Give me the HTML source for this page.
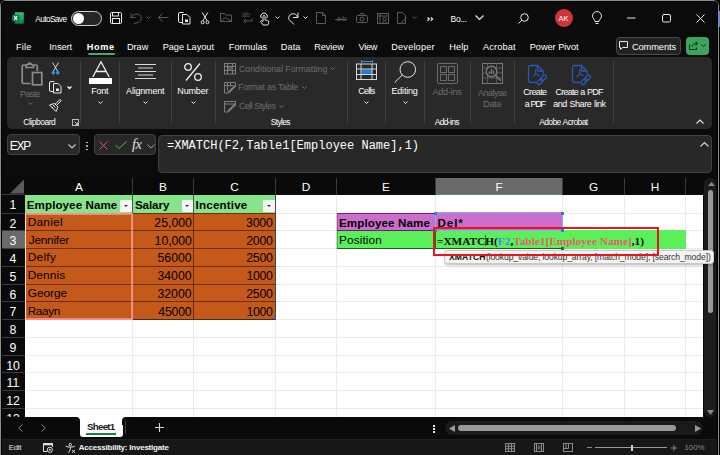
<!DOCTYPE html><html><head><meta charset="utf-8"><style>
*{margin:0;padding:0;box-sizing:border-box}
html,body{width:720px;height:455px;overflow:hidden;background:#0f0f0f}
body{position:relative;font-family:"Liberation Sans",sans-serif;color:#fff}
.a{position:absolute}
.t{position:absolute;white-space:nowrap;line-height:1}
.sep{position:absolute;width:1px;background:#3f3f3f}
svg{position:absolute;overflow:visible}
</style></head><body>
<div class="a" style="left:0;top:0;width:720px;height:455px;background:#000"></div>
<div class="a" style="left:0;top:0;width:719px;height:462px;border:1px solid #8e8e8e;border-radius:6px;background:#000"></div>
<div class="a" style="left:1px;top:1px;width:717px;height:460px;border-radius:5px;background:#0b0b0b;box-shadow:inset 0 0 0 1px #000"></div>
<div class="a" style="left:719px;top:11px;width:1px;height:16px;background:#4a86e0"></div>
<svg style="left:12px;top:12px" width="12" height="12" viewBox="0 0 12 12"><defs><linearGradient id="xg" x1="0" y1="0" x2="0" y2="1"><stop offset="0" stop-color="#33c481"/><stop offset="0.5" stop-color="#21a366"/><stop offset="1" stop-color="#107c41"/></linearGradient></defs><rect x="2.7" y="0.2" width="9.1" height="11.6" rx="0.8" fill="url(#xg)"/><rect x="0.2" y="2.7" width="7.1" height="6.6" rx="0.6" fill="#107c41"/><path d="M2.2 4.2l3 3.6M5.2 4.2l-3 3.6" stroke="#fff" stroke-width="1.1"/></svg>
<div class="t" style="left:35.30px;top:14.72px;font-size:8.3px;letter-spacing:-0.607px;color:#fff;font-family:'Liberation Sans',sans-serif;">AutoSave</div>
<div class="a" style="left:71px;top:11px;width:31px;height:15px;border:1px solid #d0d0d0;border-radius:8px;background:#262626"></div>
<div class="a" style="left:73px;top:13px;width:11px;height:11px;border-radius:50%;background:#fff"></div>
<svg style="left:110px;top:12px" width="12" height="12" viewBox="0 0 12 12" fill="none" stroke="#e8e8e8" stroke-width="1"><rect x="0.5" y="0.5" width="11" height="11" rx="1"/><rect x="2.5" y="0.5" width="6" height="3.5"/><rect x="2.5" y="6.5" width="7" height="5"/></svg>
<svg style="left:130px;top:12px" width="12" height="13" viewBox="0 0 12 13" fill="none" stroke="#5a5a5a" stroke-width="1"><path d="M1 1v4.5h4.5"/><path d="M1.3 5.3C3 2.5 5 2 7 2a4.3 4.3 0 0 1 0 8.6L3.5 12"/></svg>
<svg style="left:146px;top:16px" width="5" height="4" viewBox="0 0 5 4" fill="none" stroke="#5a5a5a" stroke-width="1"><path d="M0.5 0.5l2 2 2-2"/></svg>
<svg style="left:158px;top:13px" width="11" height="9" viewBox="0 0 11 9" fill="none" stroke="#5a5a5a" stroke-width="1"><path d="M10.5 4.5h-10M4.5 0.5l-4 4 4 4"/></svg>
<svg style="left:178px;top:12px" width="13" height="13" viewBox="0 0 13 13" fill="none" stroke="#e8e8e8" stroke-width="1"><path d="M4 10.5h-2a1.5 1.5 0 0 1-1.5-1.5v-7a1.5 1.5 0 0 1 1.5-1.5h3.5"/><path d="M4.5 2.5h4.5l3 3v6.5h-7.5z"/><rect x="7" y="7.5" width="3" height="2.5" fill="#e8e8e8" stroke="none"/></svg>
<svg style="left:200px;top:12px" width="10" height="13" viewBox="0 0 10 13" fill="none" stroke="#e8e8e8" stroke-width="1"><path d="M2.2 0.5l5 8.3M7.8 0.5l-5 8.3"/><circle cx="2.6" cy="10.3" r="1.5"/><circle cx="7.4" cy="10.3" r="1.5"/></svg>
<svg style="left:220px;top:13px" width="12" height="9" viewBox="0 0 12 9" fill="none" stroke="#5a5a5a" stroke-width="1"><path d="M0.5 8.5v-8h4l1 1.5h6v6.5z"/><path d="M0.5 8.5l5-4 6 4"/></svg>
<div class="t" style="left:242px;top:11px;font-size:7px;color:#5a5a5a">ab</div>
<svg style="left:243px;top:18px" width="10" height="6" viewBox="0 0 10 6" fill="none" stroke="#5a5a5a" stroke-width="1"><path d="M9 0.5v2.5h-8M3 1l-2 2 2 2"/></svg>
<svg style="left:259px;top:12px" width="11" height="13" viewBox="0 0 11 13" fill="none" stroke="#e8e8e8" stroke-width="1"><path d="M2.3 6.3a3.3 3.3 0 1 1 5.4 0"/><path d="M4 9.5V4.5a1 1 0 0 1 2 0v3.5l2.5 0.5a1.5 1.5 0 0 1 1.2 1.5v1.5l-1 1.5h-4.5l-2.5-3a1 1 0 0 1 1.3-1.3z"/></svg>
<svg style="left:275px;top:16px" width="5" height="4" viewBox="0 0 5 4" fill="none" stroke="#e8e8e8" stroke-width="1"><path d="M0.5 0.5l2 2 2-2"/></svg>
<svg style="left:287px;top:12px" width="13" height="13" viewBox="0 0 13 13" fill="none" stroke="#e8e8e8" stroke-width="1"><path d="M7 12.5L1.8 7.3A4.5 4.5 0 0 1 10.5 5"/><path d="M11 0.5v5h-5"/></svg>
<svg style="left:303px;top:16px" width="5" height="4" viewBox="0 0 5 4" fill="none" stroke="#e8e8e8" stroke-width="1"><path d="M0.5 0.5l2 2 2-2"/></svg>
<svg style="left:316px;top:12px" width="10" height="12" viewBox="0 0 10 12" fill="none" stroke="#5a5a5a" stroke-width="1"><path d="M0.5 0.5h6l3 3v8h-9z M6.5 0.5v3h3"/></svg>
<div class="t" style="left:336.80px;top:14.76px;font-size:8px;letter-spacing:0.760px;color:#5a5a5a;font-family:'Liberation Sans',sans-serif;">ab</div>
<svg style="left:335px;top:18.7px" width="12" height="1" viewBox="0 0 12 1" fill="none" stroke="#5a5a5a" stroke-width="1"><path d="M0 0.5h12"/></svg>
<svg style="left:356px;top:13px" width="12" height="10" viewBox="0 0 12 10" fill="none" stroke="#5a5a5a" stroke-width="1"><rect x="0.5" y="2.5" width="11" height="7" rx="1"/><circle cx="6" cy="6" r="2"/><path d="M3.5 2.5l1-2h3l1 2"/></svg>
<svg style="left:377px;top:13px" width="12" height="11" viewBox="0 0 12 11" fill="none" stroke="#5a5a5a" stroke-width="1"><rect x="0.5" y="0.5" width="11" height="10"/><path d="M0.5 3h11M3 0.5v10"/><circle cx="7.5" cy="6" r="1.5"/><path d="M5 10.5l2.5-3 2.5 3"/></svg>
<svg style="left:397px;top:12px" width="10" height="12" viewBox="0 0 10 12" fill="none" stroke="#5a5a5a" stroke-width="1"><path d="M0.5 0.5h5l3 3v8h-8z"/><path d="M9.5 5l-5 6"/></svg>
<svg style="left:412px;top:16px" width="5" height="4" viewBox="0 0 5 4" fill="none" stroke="#5a5a5a" stroke-width="1"><path d="M0.5 0.5l2 2 2-2"/></svg>
<svg style="left:427px;top:17px" width="7" height="4" viewBox="0 0 7 4" fill="none" stroke="#f0f0f0" stroke-width="1.2"><path d="M0.5 0.5l1.8 1.6-1.8 1.6M3.8 0.5l1.8 1.6-1.8 1.6"/></svg>
<div class="t" style="left:450.60px;top:14.69px;font-size:8.5px;letter-spacing:-0.316px;color:#fff;font-family:'Liberation Sans',sans-serif;">Bo...</div>
<svg style="left:475px;top:15px" width="9" height="6" viewBox="0 0 9 6" fill="none" stroke="#e8e8e8" stroke-width="1.2"><path d="M0.5 0.5l4 4 4-4"/></svg>
<svg style="left:518px;top:13px" width="11" height="11" viewBox="0 0 11 11" fill="none" stroke="#e8e8e8" stroke-width="1"><circle cx="6.5" cy="4.5" r="3.8"/><path d="M3.8 7.2L0.5 10.5"/></svg>
<div class="a" style="left:555px;top:9px;width:18px;height:18px;border-radius:50%;background:#d13438"></div>
<div class="t" style="left:558.5px;top:14.8px;font-size:7.5px;color:#fff">AK</div>
<svg style="left:592px;top:12px" width="10" height="13" viewBox="0 0 10 13" fill="none" stroke="#e8e8e8" stroke-width="1"><path d="M3 9.5c0-2-2.5-3-2.5-5.5a4.5 4.5 0 0 1 9 0c0 2.5-2.5 3.5-2.5 5.5z"/><path d="M3.5 11.5h3"/></svg>
<svg style="left:627px;top:17px" width="9" height="2" viewBox="0 0 9 2" fill="none" stroke="#e8e8e8" stroke-width="1"><path d="M0 1h8.5"/></svg>
<svg style="left:662px;top:14px" width="9" height="9" viewBox="0 0 9 9" fill="none" stroke="#e8e8e8" stroke-width="1"><rect x="0.5" y="0.5" width="8" height="7.5" rx="1.5"/></svg>
<svg style="left:696px;top:14px" width="9" height="9" viewBox="0 0 9 9" fill="none" stroke="#e8e8e8" stroke-width="1"><path d="M0.5 0.5l8 8M8.5 0.5l-8 8"/></svg>
<div class="t" style="left:16.00px;top:42.60px;font-size:9.2px;letter-spacing:0.164px;color:#fff;font-family:'Liberation Sans',sans-serif;">File</div>
<div class="t" style="left:49.30px;top:42.60px;font-size:9.2px;letter-spacing:-0.034px;color:#fff;font-family:'Liberation Sans',sans-serif;">Insert</div>
<div class="t" style="left:86.80px;top:42.60px;font-size:9.2px;letter-spacing:0.581px;font-weight:bold;color:#fff;font-family:'Liberation Sans',sans-serif;">Home</div>
<div class="t" style="left:126.90px;top:42.60px;font-size:9.2px;letter-spacing:0.018px;color:#fff;font-family:'Liberation Sans',sans-serif;">Draw</div>
<div class="t" style="left:162.70px;top:42.60px;font-size:9.2px;letter-spacing:-0.032px;color:#fff;font-family:'Liberation Sans',sans-serif;">Page Layout</div>
<div class="t" style="left:228.80px;top:42.60px;font-size:9.2px;letter-spacing:0.014px;color:#fff;font-family:'Liberation Sans',sans-serif;">Formulas</div>
<div class="t" style="left:280.80px;top:42.60px;font-size:9.2px;letter-spacing:0.092px;color:#fff;font-family:'Liberation Sans',sans-serif;">Data</div>
<div class="t" style="left:314.30px;top:42.60px;font-size:9.2px;letter-spacing:-0.088px;color:#fff;font-family:'Liberation Sans',sans-serif;">Review</div>
<div class="t" style="left:358.50px;top:42.60px;font-size:9.2px;letter-spacing:-0.260px;color:#fff;font-family:'Liberation Sans',sans-serif;">View</div>
<div class="t" style="left:391.30px;top:42.60px;font-size:9.2px;letter-spacing:0.165px;color:#fff;font-family:'Liberation Sans',sans-serif;">Developer</div>
<div class="t" style="left:449.20px;top:42.60px;font-size:9.2px;letter-spacing:0.133px;color:#fff;font-family:'Liberation Sans',sans-serif;">Help</div>
<div class="t" style="left:483.00px;top:42.60px;font-size:9.2px;letter-spacing:0.151px;color:#fff;font-family:'Liberation Sans',sans-serif;">Acrobat</div>
<div class="t" style="left:529.70px;top:42.60px;font-size:9.2px;letter-spacing:-0.015px;color:#fff;font-family:'Liberation Sans',sans-serif;">Power Pivot</div>
<div class="a" style="left:87.5px;top:53px;width:27px;height:2px;background:#4aa96c;border-radius:1px"></div>
<div class="a" style="left:616px;top:37px;width:65px;height:18px;border:1px solid #4a4a4a;border-radius:4px;background:#232323"></div>
<svg style="left:619px;top:41px" width="9" height="9" viewBox="0 0 9 9" fill="none" stroke="#e8e8e8" stroke-width="1"><path d="M0.5 0.5h8v6h-5l-2 2v-2h-1z"/></svg>
<div class="t" style="left:631.90px;top:42.69px;font-size:9.3px;letter-spacing:-0.111px;color:#fff;font-family:'Liberation Sans',sans-serif;">Comments</div>
<div class="a" style="left:686px;top:37px;width:23px;height:18px;border-radius:4px;background:#3ba55d"></div>
<svg style="left:689px;top:41px" width="10" height="9" viewBox="0 0 10 9" fill="none" stroke="#102a18" stroke-width="1"><path d="M0.5 3.5v5h7v-2M3 6c0-2.5 2-3.5 5-3.5M6.5 0.5l2.5 2-2.5 2"/></svg>
<svg style="left:701px;top:44px" width="5" height="4" viewBox="0 0 5 4" fill="none" stroke="#102a18" stroke-width="1"><path d="M0.5 0.5l2 2 2-2"/></svg>
<div class="a" style="left:7px;top:57px;width:705px;height:72px;border-radius:5px;background:#292929"></div>
<div class="sep" style="left:80px;top:61px;height:63px"></div>
<div class="sep" style="left:119px;top:61px;height:63px"></div>
<div class="sep" style="left:171px;top:61px;height:63px"></div>
<div class="sep" style="left:215px;top:61px;height:63px"></div>
<div class="sep" style="left:347px;top:61px;height:63px"></div>
<div class="sep" style="left:385px;top:61px;height:63px"></div>
<div class="sep" style="left:424px;top:61px;height:63px"></div>
<div class="sep" style="left:470px;top:61px;height:63px"></div>
<div class="sep" style="left:514px;top:61px;height:63px"></div>
<div class="sep" style="left:613px;top:61px;height:63px"></div>
<svg style="left:21px;top:62px" width="22" height="24" viewBox="0 0 22 24" fill="none" stroke="#8c8c8c" stroke-width="1.7"><path d="M9.5 21.5H2.5a1.3 1.3 0 0 1-1.3-1.3V4.3A1.3 1.3 0 0 1 2.5 3h2.5M12.5 3h2.5a1.3 1.3 0 0 1 1.3 1.3V9"/><path d="M5 5.5V3.5l3.7-2.5 3.8 2.5v2z"/><rect x="11.5" y="10.5" width="9.3" height="12.3" fill="#292929"/></svg>
<div class="t" style="left:20.10px;top:90.33px;font-size:9px;letter-spacing:-0.629px;color:#6e6e6e;font-family:'Liberation Sans',sans-serif;">Paste</div>
<svg style="left:28px;top:102px" width="5" height="3" viewBox="0 0 5 3" fill="none" stroke="#6e6e6e" stroke-width="1"><path d="M0.5 0.5l2 2 2-2"/></svg>
<svg style="left:51px;top:62px" width="9" height="13" viewBox="0 0 9 13" fill="none" stroke="#e8e8e8" stroke-width="0.9"><path d="M1.5 0.5l5.3 9M7.5 0.5l-5.3 9"/><circle cx="2.3" cy="10.8" r="1.4" fill="#3c8ee0" stroke="#3c8ee0"/><circle cx="6.7" cy="10.8" r="1.4" fill="#3c8ee0" stroke="#3c8ee0"/></svg>
<svg style="left:49px;top:81px" width="13" height="13" viewBox="0 0 13 13" fill="none" stroke="#e8e8e8" stroke-width="1"><path d="M4 10.5h-2a1.5 1.5 0 0 1-1.5-1.5v-7a1.5 1.5 0 0 1 1.5-1.5h3.5"/><path d="M4.5 2.5h4.5l3 3v6.5h-7.5z"/><rect x="7" y="7.5" width="3" height="2.5" fill="#e8e8e8" stroke="none"/></svg>
<svg style="left:67px;top:86px" width="5" height="4" viewBox="0 0 5 4" fill="none" stroke="#f0f0f0" stroke-width="1.3"><path d="M0.5 0.5l2 2 2-2"/></svg>
<svg style="left:49px;top:99px" width="13" height="13" viewBox="0 0 13 13" fill="none" stroke="#e8e8e8" stroke-width="1"><path d="M5.5 4.5l3.5 3.5-2 4.5-6.5-6.5z"/><path d="M7.5 6.5l4.5-4.5a1 1 0 0 0-1.3-1.3L6.2 5.2"/><path d="M2.5 7.5l2 2M4 6l2.5 2.5"/></svg>
<div class="t" style="left:23.30px;top:117.89px;font-size:8.5px;letter-spacing:-0.481px;color:#fff;font-family:'Liberation Sans',sans-serif;">Clipboard</div>
<svg style="left:72px;top:119px" width="7" height="7" viewBox="0 0 7 7" fill="none" stroke="#bbb" stroke-width="1"><rect x="0.5" y="0.5" width="6" height="6"/><path d="M2.5 2.5l3 3M5.5 3.5v2h-2"/></svg>
<svg style="left:92px;top:61px" width="18" height="16" viewBox="0 0 18 16" fill="none" stroke="#f0f0f0" stroke-width="1.3"><path d="M0.8 16L9 0.8 17.2 16M4 10.5h10"/></svg>
<div class="a" style="left:89px;top:77.5px;width:23px;height:6px;background:#fff"></div>
<div class="t" style="left:91.30px;top:86.83px;font-size:9px;letter-spacing:-0.227px;color:#fff;font-family:'Liberation Sans',sans-serif;">Font</div>
<svg style="left:98px;top:101px" width="5" height="3" viewBox="0 0 5 3" fill="none" stroke="#e8e8e8" stroke-width="1"><path d="M0.5 0.5l2 2 2-2"/></svg>
<svg style="left:135px;top:64px" width="21" height="15" viewBox="0 0 21 15" fill="none" stroke="#d8d8d8" stroke-width="1"><path d="M0 0.5h21M3 4h15M0 7.5h21M3 11h15M0 14.5h21"/></svg>
<div class="t" style="left:126.10px;top:86.83px;font-size:9px;letter-spacing:-0.201px;color:#fff;font-family:'Liberation Sans',sans-serif;">Alignment</div>
<svg style="left:143px;top:101px" width="5" height="3" viewBox="0 0 5 3" fill="none" stroke="#e8e8e8" stroke-width="1"><path d="M0.5 0.5l2 2 2-2"/></svg>
<svg style="left:184px;top:63px" width="18" height="18" viewBox="0 0 18 18" fill="none" stroke="#f0f0f0" stroke-width="1.3"><circle cx="4" cy="4" r="3.3"/><circle cx="14" cy="14" r="3.3"/><path d="M16 0.5L2 17.5"/></svg>
<div class="t" style="left:177.30px;top:86.83px;font-size:9px;letter-spacing:-0.157px;color:#fff;font-family:'Liberation Sans',sans-serif;">Number</div>
<svg style="left:191px;top:101px" width="5" height="3" viewBox="0 0 5 3" fill="none" stroke="#e8e8e8" stroke-width="1"><path d="M0.5 0.5l2 2 2-2"/></svg>
<svg style="left:224px;top:63.0px" width="12" height="11.5" viewBox="0 0 12 11.5" fill="none" stroke="#7e7e7e" stroke-width="1"><rect x="0.5" y="0.5" width="11" height="10.5"/><path d="M0.5 3.5h11M0.5 7.5h11M3.5 0.5v10.5M8.5 0.5v10.5"/><rect x="4" y="4" width="4.5" height="3.5" fill="#5a5a5a" stroke="none"/></svg>
<div class="t" style="left:239.00px;top:64.55px;font-size:8.8px;letter-spacing:-0.008px;color:#6e6e6e;font-family:'Liberation Sans',sans-serif;">Conditional Formatting</div>
<svg style="left:224px;top:81.8px" width="12" height="11.5" viewBox="0 0 12 11.5" fill="none" stroke="#7e7e7e" stroke-width="1"><path d="M11.5 5V0.5H0.5v10.5H5"/><path d="M0.5 3.5h9M3.5 0.5v8M6.5 0.5v4"/><path d="M4.5 10.5l6.5-6.5" stroke-width="2"/></svg>
<div class="t" style="left:238.00px;top:83.35px;font-size:8.8px;letter-spacing:-0.191px;color:#6e6e6e;font-family:'Liberation Sans',sans-serif;">Format as Table</div>
<svg style="left:224px;top:100.6px" width="12" height="11.5" viewBox="0 0 12 11.5" fill="none" stroke="#7e7e7e" stroke-width="1"><path d="M11.5 4.5V0.5H0.5v10.5H4.5"/><path d="M0.5 3h11"/><path d="M4 10.5l7-7" stroke-width="2"/></svg>
<div class="t" style="left:239.00px;top:102.15px;font-size:8.8px;letter-spacing:-0.463px;color:#6e6e6e;font-family:'Liberation Sans',sans-serif;">Cell Styles</div>
<svg style="left:330px;top:67px" width="5" height="3" viewBox="0 0 5 3" fill="none" stroke="#6e6e6e" stroke-width="1"><path d="M0.5 0.5l2 2 2-2"/></svg>
<svg style="left:301.5px;top:86px" width="5" height="3" viewBox="0 0 5 3" fill="none" stroke="#6e6e6e" stroke-width="1"><path d="M0.5 0.5l2 2 2-2"/></svg>
<svg style="left:279px;top:105px" width="5" height="3" viewBox="0 0 5 3" fill="none" stroke="#6e6e6e" stroke-width="1"><path d="M0.5 0.5l2 2 2-2"/></svg>
<div class="t" style="left:270.70px;top:117.89px;font-size:8.5px;letter-spacing:-0.657px;color:#fff;font-family:'Liberation Sans',sans-serif;">Styles</div>
<svg style="left:356px;top:60px" width="21" height="20" viewBox="0 0 21 20" fill="none" stroke="#d8d8d8" stroke-width="1"><path d="M5.5 1.5h11M5.5 0v3M16.5 0v3" stroke="#3c8ee0"/><rect x="5.5" y="9.5" width="10.5" height="5" fill="#1f7ad8" stroke="none"/><rect x="0.5" y="4" width="20" height="15.5"/><path d="M0.5 9h20M0.5 14.5h20M5 4v15.5M16 4v15.5"/></svg>
<div class="t" style="left:358.20px;top:86.83px;font-size:9px;letter-spacing:-0.765px;color:#fff;font-family:'Liberation Sans',sans-serif;">Cells</div>
<svg style="left:364px;top:101px" width="5" height="3" viewBox="0 0 5 3" fill="none" stroke="#e8e8e8" stroke-width="1"><path d="M0.5 0.5l2 2 2-2"/></svg>
<svg style="left:394px;top:61px" width="23" height="22" viewBox="0 0 23 22" fill="none" stroke="#e8e8e8" stroke-width="1"><circle cx="13.8" cy="8.5" r="7.8"/><path d="M8.3 14L0.7 21.5"/></svg>
<div class="t" style="left:391.40px;top:86.83px;font-size:9px;letter-spacing:-0.172px;color:#fff;font-family:'Liberation Sans',sans-serif;">Editing</div>
<svg style="left:403px;top:101px" width="5" height="3" viewBox="0 0 5 3" fill="none" stroke="#e8e8e8" stroke-width="1"><path d="M0.5 0.5l2 2 2-2"/></svg>
<svg style="left:437px;top:63px" width="21" height="21" viewBox="0 0 21 21" fill="none" stroke="#6a6a6a" stroke-width="1"><rect x="0.5" y="0.5" width="20" height="20" rx="1.5"/><rect x="3.5" y="3.5" width="6" height="6"/><rect x="11.5" y="3.5" width="6" height="6"/><rect x="3.5" y="11.5" width="6" height="6"/><rect x="11.5" y="11.5" width="6" height="6"/></svg>
<div class="t" style="left:432.50px;top:88.43px;font-size:9px;letter-spacing:-0.200px;color:#6e6e6e;font-family:'Liberation Sans',sans-serif;">Add-ins</div>
<div class="t" style="left:434.70px;top:117.89px;font-size:8.5px;letter-spacing:-0.653px;color:#fff;font-family:'Liberation Sans',sans-serif;">Add-ins</div>
<svg style="left:482px;top:63px" width="21" height="21" viewBox="0 0 21 21" fill="none" stroke="#7a7a7a" stroke-width="1"><rect x="0.5" y="0.5" width="20" height="20"/><path d="M0.5 5h20M0.5 10h20M0.5 15h20M5.5 0.5v20M14.5 0.5v20" stroke="#5a5a5a"/><circle cx="9.5" cy="8.5" r="5.3" fill="#292929" stroke-width="1.4"/><path d="M13.3 12.3l5.5 5.5" stroke-width="1.4"/><path d="M7.5 11V8.5M9.5 11V5.5M11.5 11V7.5" stroke-width="1.3"/></svg>
<div class="t" style="left:478.10px;top:88.73px;font-size:9px;letter-spacing:-0.506px;color:#6e6e6e;font-family:'Liberation Sans',sans-serif;">Analyse</div>
<div class="t" style="left:483.30px;top:99.93px;font-size:9px;letter-spacing:-0.372px;color:#6e6e6e;font-family:'Liberation Sans',sans-serif;">Data</div>
<svg style="left:527.5px;top:64.5px" width="20" height="21" viewBox="0 0 20 21" fill="none" stroke="#2a5ab4" stroke-width="1.3"><path d="M8.5 17.3H2.2A1.7 1.7 0 0 1 0.5 15.6V2.2A1.7 1.7 0 0 1 2.2 0.5h7.3l5.5 5.5v3.5"/><path d="M9.5 0.5v4.3a1.2 1.2 0 0 0 1.2 1.2h4.3"/><path d="M7.8 4.2v4.8M7.8 9l-3.2 2.6M7.8 9l3.6 1.6" stroke-width="1.2"/><rect x="8.6" y="14.8" width="6.6" height="3.6" rx="1.8" transform="rotate(-45 11.9 16.6)"/><rect x="12.3" y="11.1" width="6.6" height="3.6" rx="1.8" transform="rotate(-45 15.6 12.9)"/></svg>
<svg style="left:572px;top:64.5px" width="20" height="21" viewBox="0 0 20 21" fill="none" stroke="#2a5ab4" stroke-width="1.3"><path d="M8.5 17.3H2.2A1.7 1.7 0 0 1 0.5 15.6V2.2A1.7 1.7 0 0 1 2.2 0.5h7.3l5.5 5.5v3.5"/><path d="M9.5 0.5v4.3a1.2 1.2 0 0 0 1.2 1.2h4.3"/><path d="M7.8 4.2v4.8M7.8 9l-3.2 2.6M7.8 9l3.6 1.6" stroke-width="1.2"/><rect x="8.6" y="14.8" width="6.6" height="3.6" rx="1.8" transform="rotate(-45 11.9 16.6)"/><rect x="12.3" y="11.1" width="6.6" height="3.6" rx="1.8" transform="rotate(-45 15.6 12.9)"/></svg>
<div class="t" style="left:523.20px;top:88.43px;font-size:9px;letter-spacing:-0.638px;color:#fff;font-family:'Liberation Sans',sans-serif;">Create</div>
<div class="t" style="left:524.70px;top:99.83px;font-size:9px;letter-spacing:-1.235px;color:#fff;font-family:'Liberation Sans',sans-serif;;word-spacing:0.7px">a PDF</div>
<div class="t" style="left:555.40px;top:88.43px;font-size:9px;letter-spacing:-0.734px;color:#fff;font-family:'Liberation Sans',sans-serif;;word-spacing:0.6px">Create a PDF</div>
<div class="t" style="left:553.20px;top:99.83px;font-size:9px;letter-spacing:-0.449px;color:#fff;font-family:'Liberation Sans',sans-serif;;word-spacing:0.6px">and Share link</div>
<div class="t" style="left:539.20px;top:117.89px;font-size:8.5px;letter-spacing:-0.613px;color:#fff;font-family:'Liberation Sans',sans-serif;;word-spacing:0.6px">Adobe Acrobat</div>
<svg style="left:696px;top:119px" width="8" height="5" viewBox="0 0 8 5" fill="none" stroke="#e8e8e8" stroke-width="1.1"><path d="M0.5 4.5l3.5-3.5 3.5 3.5"/></svg>
<div class="a" style="left:7px;top:134px;width:73px;height:21px;border:1px solid #424242;border-radius:4px;background:#282828"></div>
<div class="t" style="left:9.80px;top:139.63px;font-size:12px;letter-spacing:-1.220px;color:#fff;font-family:'Liberation Sans',sans-serif;">EXP</div>
<svg style="left:68px;top:144px" width="8" height="5" viewBox="0 0 8 5" fill="none" stroke="#d0d0d0" stroke-width="1.1"><path d="M0.5 0.5l3.5 3.5 3.5-3.5"/></svg>
<div class="a" style="left:86.3px;top:141.5px;width:1.6px;height:1.6px;background:#ddd;border-radius:1px"></div>
<div class="a" style="left:86.3px;top:145px;width:1.6px;height:1.6px;background:#ddd;border-radius:1px"></div>
<div class="a" style="left:86.3px;top:148.5px;width:1.6px;height:1.6px;background:#ddd;border-radius:1px"></div>
<div class="a" style="left:94px;top:134px;width:62px;height:21px;border:1px solid #424242;border-radius:4px;background:#282828"></div>
<svg style="left:99px;top:140.5px" width="9" height="9" viewBox="0 0 9 9" fill="none" stroke="#e05555" stroke-width="1"><path d="M0.5 0.5l8 8M8.5 0.5l-8 8"/></svg>
<svg style="left:115px;top:141px" width="12" height="8" viewBox="0 0 12 8" fill="none" stroke="#4cc25a" stroke-width="1"><path d="M0.5 4l3.5 3.5 7.5-7"/></svg>
<div class="t" style="left:132px;top:137px;font-size:14.5px;font-style:italic;font-family:'Liberation Serif',serif;color:#e0e0e0;letter-spacing:-0.5px">fx</div>
<svg style="left:147px;top:144px" width="8" height="5" viewBox="0 0 8 5" fill="none" stroke="#9a9a9a" stroke-width="1"><path d="M0.5 0.5l3.5 3.5 3.5-3.5"/></svg>
<div class="a" style="left:158px;top:134.5px;width:554px;height:38px;border:1px solid #424242;border-radius:4px;background:#282828"></div>
<div class="t" style="left:167px;top:139.5px;font-size:12px;font-family:'Liberation Mono',monospace;color:#fff">=XMATCH(F2,Table1[Employee Name],1)</div>
<svg style="left:700px;top:142px" width="9" height="5" viewBox="0 0 9 5" fill="none" stroke="#d8d8d8" stroke-width="1.1"><path d="M0.5 4.5l4-4 4 4"/></svg>
<div class="a" style="left:2px;top:177px;width:701px;height:18px;background:#0a0a0a"></div>
<div class="a" style="left:2px;top:195px;width:23px;height:222px;background:#0a0a0a"></div>
<svg style="left:10px;top:179px" width="15" height="15" viewBox="0 0 15 15" fill="none" stroke="none" stroke-width="1"><path d="M14 0.5V14.5H0z" fill="#5a5a5a" stroke="none"/></svg>
<div class="a" style="left:435px;top:178px;width:127px;height:17px;background:#6a6a6a"></div>
<div class="a" style="left:435px;top:194px;width:127px;height:1px;background:#3d9a5e"></div>
<div class="a" style="left:132px;top:178px;width:1px;height:17px;background:#3a3a3a"></div>
<div class="a" style="left:193px;top:178px;width:1px;height:17px;background:#3a3a3a"></div>
<div class="a" style="left:275px;top:178px;width:1px;height:17px;background:#3a3a3a"></div>
<div class="a" style="left:336px;top:178px;width:1px;height:17px;background:#3a3a3a"></div>
<div class="a" style="left:435px;top:178px;width:1px;height:17px;background:#3a3a3a"></div>
<div class="a" style="left:562px;top:178px;width:1px;height:17px;background:#3a3a3a"></div>
<div class="a" style="left:624px;top:178px;width:1px;height:17px;background:#3a3a3a"></div>
<div class="a" style="left:685px;top:178px;width:1px;height:17px;background:#3a3a3a"></div>
<div class="t" style="left:25px;width:107px;text-align:center;top:182.2px;font-size:11.8px;padding-left:1px;color:#fff">A</div>
<div class="t" style="left:132px;width:61px;text-align:center;top:182.2px;font-size:11.8px;padding-left:1px;color:#fff">B</div>
<div class="t" style="left:193px;width:82px;text-align:center;top:182.2px;font-size:11.8px;padding-left:1px;color:#fff">C</div>
<div class="t" style="left:275px;width:61px;text-align:center;top:182.2px;font-size:11.8px;padding-left:1px;color:#fff">D</div>
<div class="t" style="left:336px;width:99px;text-align:center;top:182.2px;font-size:11.8px;padding-left:1px;color:#fff">E</div>
<div class="t" style="left:435px;width:127px;text-align:center;top:182.2px;font-size:11.8px;padding-left:1px;color:#fff">F</div>
<div class="t" style="left:562px;width:62px;text-align:center;top:182.2px;font-size:11.8px;padding-left:1px;color:#fff">G</div>
<div class="t" style="left:624px;width:61px;text-align:center;top:182.2px;font-size:11.8px;padding-left:1px;color:#fff">H</div>
<div class="a" style="left:25px;top:195px;width:678px;height:222px;background:#fff"></div>
<div class="a" style="left:25px;top:213px;width:678px;height:1px;background:#ebebeb"></div>
<div class="a" style="left:25px;top:230px;width:678px;height:1px;background:#ebebeb"></div>
<div class="a" style="left:25px;top:248px;width:678px;height:1px;background:#ebebeb"></div>
<div class="a" style="left:25px;top:266px;width:678px;height:1px;background:#ebebeb"></div>
<div class="a" style="left:25px;top:284px;width:678px;height:1px;background:#ebebeb"></div>
<div class="a" style="left:25px;top:301px;width:678px;height:1px;background:#ebebeb"></div>
<div class="a" style="left:25px;top:319px;width:678px;height:1px;background:#ebebeb"></div>
<div class="a" style="left:25px;top:337px;width:678px;height:1px;background:#ebebeb"></div>
<div class="a" style="left:25px;top:355px;width:678px;height:1px;background:#ebebeb"></div>
<div class="a" style="left:25px;top:372px;width:678px;height:1px;background:#ebebeb"></div>
<div class="a" style="left:25px;top:390px;width:678px;height:1px;background:#ebebeb"></div>
<div class="a" style="left:25px;top:408px;width:678px;height:1px;background:#ebebeb"></div>
<div class="a" style="left:132px;top:195px;width:1px;height:222px;background:#ebebeb"></div>
<div class="a" style="left:193px;top:195px;width:1px;height:222px;background:#ebebeb"></div>
<div class="a" style="left:275px;top:195px;width:1px;height:222px;background:#ebebeb"></div>
<div class="a" style="left:336px;top:195px;width:1px;height:222px;background:#ebebeb"></div>
<div class="a" style="left:435px;top:195px;width:1px;height:222px;background:#ebebeb"></div>
<div class="a" style="left:562px;top:195px;width:1px;height:222px;background:#ebebeb"></div>
<div class="a" style="left:624px;top:195px;width:1px;height:222px;background:#ebebeb"></div>
<div class="a" style="left:685px;top:195px;width:1px;height:222px;background:#ebebeb"></div>
<div class="a" style="left:2px;top:230px;width:23px;height:18px;background:#6a6a6a"></div>
<div class="a" style="left:2px;top:213px;width:23px;height:1px;background:#3a3a3a"></div>
<div class="a" style="left:2px;top:230px;width:23px;height:1px;background:#3a3a3a"></div>
<div class="a" style="left:2px;top:248px;width:23px;height:1px;background:#3a3a3a"></div>
<div class="a" style="left:2px;top:266px;width:23px;height:1px;background:#3a3a3a"></div>
<div class="a" style="left:2px;top:284px;width:23px;height:1px;background:#3a3a3a"></div>
<div class="a" style="left:2px;top:301px;width:23px;height:1px;background:#3a3a3a"></div>
<div class="a" style="left:2px;top:319px;width:23px;height:1px;background:#3a3a3a"></div>
<div class="a" style="left:2px;top:337px;width:23px;height:1px;background:#3a3a3a"></div>
<div class="a" style="left:2px;top:355px;width:23px;height:1px;background:#3a3a3a"></div>
<div class="a" style="left:2px;top:372px;width:23px;height:1px;background:#3a3a3a"></div>
<div class="a" style="left:2px;top:390px;width:23px;height:1px;background:#3a3a3a"></div>
<div class="a" style="left:2px;top:408px;width:23px;height:1px;background:#3a3a3a"></div>
<div class="a" style="left:2px;top:194px;width:23px;height:1px;background:#3a3a3a"></div>
<div class="t" style="left:2px;width:22px;text-align:center;top:198.9px;font-size:12.3px;color:#fff">1</div>
<div class="t" style="left:2px;width:22px;text-align:center;top:217.9px;font-size:12.3px;color:#fff">2</div>
<div class="t" style="left:2px;width:22px;text-align:center;top:234.9px;font-size:12.3px;color:#fff">3</div>
<div class="t" style="left:2px;width:22px;text-align:center;top:252.9px;font-size:12.3px;color:#fff">4</div>
<div class="t" style="left:2px;width:22px;text-align:center;top:270.9px;font-size:12.3px;color:#fff">5</div>
<div class="t" style="left:2px;width:22px;text-align:center;top:288.9px;font-size:12.3px;color:#fff">6</div>
<div class="t" style="left:2px;width:22px;text-align:center;top:305.9px;font-size:12.3px;color:#fff">7</div>
<div class="t" style="left:2px;width:22px;text-align:center;top:323.9px;font-size:12.3px;color:#fff">8</div>
<div class="t" style="left:2px;width:22px;text-align:center;top:341.9px;font-size:12.3px;color:#fff">9</div>
<div class="t" style="left:2px;width:22px;text-align:center;top:359.9px;font-size:12.3px;color:#fff">10</div>
<div class="t" style="left:2px;width:22px;text-align:center;top:376.9px;font-size:12.3px;color:#fff">11</div>
<div class="t" style="left:2px;width:22px;text-align:center;top:394.9px;font-size:12.3px;color:#fff">12</div>
<div class="t" style="left:2px;width:22px;text-align:center;top:412.9px;font-size:12.3px;color:#fff">13</div>
<div class="a" style="left:25px;top:195px;width:250px;height:18px;background:#86e58b"></div>
<div class="a" style="left:25px;top:213px;width:250px;height:106px;background:#c5591a"></div>
<div class="a" style="left:25px;top:213px;width:250px;height:1px;background:#6e2c08"></div>
<div class="a" style="left:25px;top:230px;width:250px;height:1px;background:#6e2c08"></div>
<div class="a" style="left:25px;top:248px;width:250px;height:1px;background:#6e2c08"></div>
<div class="a" style="left:25px;top:266px;width:250px;height:1px;background:#6e2c08"></div>
<div class="a" style="left:25px;top:284px;width:250px;height:1px;background:#6e2c08"></div>
<div class="a" style="left:25px;top:301px;width:250px;height:1px;background:#6e2c08"></div>
<div class="a" style="left:133px;top:319px;width:142px;height:1px;background:#4a2a1a"></div>
<div class="a" style="left:132px;top:195px;width:1px;height:18px;background:#2f6a3c"></div>
<div class="a" style="left:132px;top:213px;width:1px;height:107px;background:#6e2c08"></div>
<div class="a" style="left:193px;top:195px;width:1px;height:18px;background:#2f6a3c"></div>
<div class="a" style="left:193px;top:213px;width:1px;height:107px;background:#6e2c08"></div>
<div class="a" style="left:275px;top:195px;width:1px;height:125px;background:#4a4a4a"></div>
<div class="a" style="left:25px;top:213px;width:108px;height:107px;border:1px solid #ff8a9a;border-left-color:#f4d8d0"></div>
<div class="a" style="left:26px;top:214px;width:106px;height:105px;border:1px solid rgba(255,190,170,0.55);border-left:none"></div>
<svg style="left:272px;top:316px" width="3" height="3"><path d="M3 0V3H0z" fill="#4a5ad0"/></svg>
<div class="a" style="left:120.2px;top:200.4px;width:11.5px;height:11.4px;background:#f5f5f8"></div>
<div class="a" style="left:123.9px;top:204.8px;width:0;height:0;border-left:2.2px solid transparent;border-right:2.2px solid transparent;border-top:2.2px solid #333"></div>
<div class="a" style="left:181.6px;top:200.4px;width:11.5px;height:11.4px;background:#f5f5f8"></div>
<div class="a" style="left:185.29999999999998px;top:204.8px;width:0;height:0;border-left:2.2px solid transparent;border-right:2.2px solid transparent;border-top:2.2px solid #333"></div>
<div class="a" style="left:263.4px;top:200.4px;width:11.5px;height:11.4px;background:#f5f5f8"></div>
<div class="a" style="left:267.09999999999997px;top:204.8px;width:0;height:0;border-left:2.2px solid transparent;border-right:2.2px solid transparent;border-top:2.2px solid #333"></div>
<div class="t" style="left:26.80px;top:199.29px;font-size:11.6px;letter-spacing:0.074px;font-weight:bold;color:#000;font-family:'Liberation Sans',sans-serif;">Employee Name</div>
<div class="t" style="left:134.90px;top:199.29px;font-size:11.6px;letter-spacing:-0.062px;font-weight:bold;color:#000;font-family:'Liberation Sans',sans-serif;">Salary</div>
<div class="t" style="left:195.60px;top:199.29px;font-size:11.6px;letter-spacing:0.177px;font-weight:bold;color:#000;font-family:'Liberation Sans',sans-serif;">Incentive</div>
<div class="t" style="left:27.70px;top:216.72px;font-size:11.8px;letter-spacing:0.280px;color:#000;font-family:'Liberation Sans',sans-serif;">Daniel</div>
<div class="t" style="left:154.31px;top:216.66px;font-size:12.2px;letter-spacing:0.059px;color:#000;font-family:'Liberation Sans',sans-serif;">25,000</div>
<div class="t" style="left:245.99px;top:216.65px;font-size:12.3px;letter-spacing:-0.165px;color:#000;font-family:'Liberation Sans',sans-serif;">3000</div>
<div class="t" style="left:28.70px;top:234.57px;font-size:11.8px;letter-spacing:-0.208px;color:#000;font-family:'Liberation Sans',sans-serif;">Jennifer</div>
<div class="t" style="left:154.61px;top:234.52px;font-size:12.2px;letter-spacing:-0.002px;color:#000;font-family:'Liberation Sans',sans-serif;">10,000</div>
<div class="t" style="left:246.18px;top:234.51px;font-size:12.3px;letter-spacing:-0.226px;color:#000;font-family:'Liberation Sans',sans-serif;">2000</div>
<div class="t" style="left:27.70px;top:252.43px;font-size:11.8px;letter-spacing:0.310px;color:#000;font-family:'Liberation Sans',sans-serif;">Delfy</div>
<div class="t" style="left:157.60px;top:252.38px;font-size:12.2px;letter-spacing:0.000px;color:#000;font-family:'Liberation Sans',sans-serif;">56000</div>
<div class="t" style="left:246.18px;top:252.37px;font-size:12.3px;letter-spacing:-0.226px;color:#000;font-family:'Liberation Sans',sans-serif;">2500</div>
<div class="t" style="left:27.70px;top:270.29px;font-size:11.8px;letter-spacing:0.160px;color:#000;font-family:'Liberation Sans',sans-serif;">Dennis</div>
<div class="t" style="left:157.54px;top:270.24px;font-size:12.2px;letter-spacing:0.015px;color:#000;font-family:'Liberation Sans',sans-serif;">34000</div>
<div class="t" style="left:246.49px;top:270.22px;font-size:12.3px;letter-spacing:-0.328px;color:#000;font-family:'Liberation Sans',sans-serif;">1000</div>
<div class="t" style="left:27.70px;top:288.15px;font-size:11.8px;letter-spacing:0.022px;color:#000;font-family:'Liberation Sans',sans-serif;">George</div>
<div class="t" style="left:157.54px;top:288.09px;font-size:12.2px;letter-spacing:0.015px;color:#000;font-family:'Liberation Sans',sans-serif;">32000</div>
<div class="t" style="left:246.18px;top:288.08px;font-size:12.3px;letter-spacing:-0.226px;color:#000;font-family:'Liberation Sans',sans-serif;">2500</div>
<div class="t" style="left:27.70px;top:306.00px;font-size:11.8px;letter-spacing:-0.363px;color:#000;font-family:'Liberation Sans',sans-serif;">Raayn</div>
<div class="t" style="left:158.36px;top:305.95px;font-size:12.2px;letter-spacing:-0.189px;color:#000;font-family:'Liberation Sans',sans-serif;">45000</div>
<div class="t" style="left:246.49px;top:305.94px;font-size:12.3px;letter-spacing:-0.328px;color:#000;font-family:'Liberation Sans',sans-serif;">1000</div>
<div class="a" style="left:336px;top:213px;width:227px;height:18px;background:#cc6ccc"></div>
<div class="a" style="left:336px;top:230px;width:350px;height:19px;background:#5af05a"></div>
<div class="a" style="left:336px;top:213px;width:100px;height:1px;background:#6a1f6a"></div>
<div class="a" style="left:336px;top:230px;width:227px;height:1px;background:#6a1f6a"></div>
<div class="a" style="left:336px;top:248px;width:227px;height:1px;background:#1f5a24"></div>
<div class="a" style="left:336px;top:213px;width:1px;height:36px;background:#d8c8d8"></div>
<div class="a" style="left:337px;top:214px;width:1px;height:16px;background:#a850a8"></div>
<div class="a" style="left:337px;top:231px;width:1px;height:17px;background:#3cc03c"></div>
<div class="a" style="left:435px;top:231px;width:1px;height:18px;background:#1f6a2a"></div>
<div class="a" style="left:435px;top:212px;width:128px;height:19px;border:1px solid #7ab4f5"></div>
<div class="a" style="left:434px;top:212px;width:2.5px;height:2.5px;background:#2f7ae8"></div>
<div class="a" style="left:561px;top:212px;width:2.5px;height:2.5px;background:#2f7ae8"></div>
<div class="a" style="left:434px;top:229px;width:2.5px;height:2.5px;background:#2f7ae8"></div>
<div class="a" style="left:561px;top:229px;width:2.5px;height:2.5px;background:#2f7ae8"></div>
<div class="a" style="left:561px;top:247px;width:3px;height:3px;background:#1e6b3a"></div>
<div class="t" style="left:339.00px;top:216.74px;font-size:11.6px;letter-spacing:0.108px;font-weight:bold;color:#000;font-family:'Liberation Sans',sans-serif;">Employee Name</div>
<div class="t" style="left:437.50px;top:216.74px;font-size:11.6px;letter-spacing:0.931px;font-weight:bold;color:#000;font-family:'Liberation Sans',sans-serif;">Del*</div>
<div class="t" style="left:339.00px;top:234.57px;font-size:11.8px;letter-spacing:0.129px;color:#000;font-family:'Liberation Sans',sans-serif;">Position</div>
<div class="t" style="left:437px;top:235.7px;font-size:11.3px;font-weight:bold;font-family:'Liberation Serif',serif;color:#000">=XMATCH(<span style="color:#4f86ee">F2</span>,<span style="color:#ea5a6c">Table1[Employee Name]</span>,1)</div>
<div class="a" style="left:485px;top:235px;width:1px;height:11px;background:#555"></div>
<div class="a" style="left:703px;top:177px;width:14px;height:241px;background:#0b0b0b"></div>
<div class="a" style="left:704px;top:178px;width:12px;height:239px;border-radius:6px;background:#1c1c1c"></div>
<svg style="left:707.5px;top:182px" width="7" height="4" viewBox="0 0 7 4" fill="none" stroke="none" stroke-width="1"><path d="M0 4L3.5 0 7 4z" fill="#8a8a8a" stroke="none"/></svg>
<div class="a" style="left:708px;top:190px;width:4.5px;height:123px;border-radius:2.5px;background:#9a9a9a"></div>
<svg style="left:707px;top:409.5px" width="7" height="5" viewBox="0 0 7 5" fill="none" stroke="none" stroke-width="1"><path d="M0 0h7L3.5 5z" fill="#8a8a8a" stroke="none"/></svg>
<div class="a" style="left:443.5px;top:250px;width:270px;height:14px;background:#f3f3f3;border:1px solid #c8c8c8;border-radius:3px;box-shadow:1px 1px 3px rgba(0,0,0,.3)"></div>
<div class="t" style="left:449.00px;top:253.48px;font-size:8.6px;letter-spacing:0.056px;font-weight:bold;color:#111;font-family:'Liberation Sans',sans-serif;">XMATCH</div>
<div class="t" style="left:485.90px;top:253.48px;font-size:8.6px;letter-spacing:-0.110px;color:#333;font-family:'Liberation Sans',sans-serif;">(lookup_value, lookup_array, [match_mode], [search_mode])</div>
<div class="a" style="left:432.5px;top:226.5px;width:226px;height:29px;border:2.3px solid #e8141e"></div>
<div class="a" style="left:2px;top:417px;width:715px;height:21px;background:#0a0a0a"></div>
<div class="a" style="left:80px;top:416px;width:42.5px;height:21px;background:#fff;border-radius:0 0 3px 3px"></div>
<div class="a" style="left:76px;top:417px;width:4px;height:4px;background:#fff"></div>
<div class="a" style="left:72px;top:417px;width:8px;height:8px;background:#0a0a0a;border-top-right-radius:4px"></div>
<div class="a" style="left:122px;top:417px;width:4px;height:4px;background:#fff"></div>
<div class="a" style="left:122px;top:417px;width:8px;height:8px;background:#0a0a0a;border-top-left-radius:4px"></div>
<div class="t" style="left:87.00px;top:421.82px;font-size:9.8px;letter-spacing:-0.771px;font-weight:bold;color:#222;font-family:'Liberation Sans',sans-serif;">Sheet1</div>
<div class="a" style="left:86px;top:433px;width:30px;height:2px;background:#1f7a3d"></div>
<div class="a" style="left:125px;top:421px;width:1px;height:13px;background:#444"></div>
<svg style="left:18px;top:424px" width="5" height="8" viewBox="0 0 5 8" fill="none" stroke="#8a8a8a" stroke-width="1"><path d="M4.5 0.5L0.5 4l4 3.5"/></svg>
<svg style="left:41px;top:424px" width="5" height="8" viewBox="0 0 5 8" fill="none" stroke="#8a8a8a" stroke-width="1"><path d="M0.5 0.5L4.5 4l-4 3.5"/></svg>
<svg style="left:155px;top:423px" width="9" height="9" viewBox="0 0 9 9" fill="none" stroke="#d8d8d8" stroke-width="1.1"><path d="M4.5 0v9M0 4.5h9"/></svg>
<div class="a" style="left:433px;top:425px;width:2px;height:2px;background:#eee"></div>
<div class="a" style="left:433px;top:428px;width:2px;height:2px;background:#eee"></div>
<div class="a" style="left:433px;top:431px;width:2px;height:2px;background:#eee"></div>
<div class="a" style="left:445px;top:421px;width:258px;height:13.5px;border-radius:7px;background:#1a1a1a"></div>
<svg style="left:448.5px;top:424.5px" width="6" height="7" viewBox="0 0 6 7" fill="none" stroke="none" stroke-width="1"><path d="M6 0v7L0 3.5z" fill="#9a9a9a" stroke="none"/></svg>
<div class="a" style="left:458px;top:424.5px;width:218px;height:6.5px;border-radius:3.5px;background:#9a9a9a"></div>
<svg style="left:695px;top:424.5px" width="6" height="7" viewBox="0 0 6 7" fill="none" stroke="none" stroke-width="1"><path d="M0 0v7l6-3.5z" fill="#9a9a9a" stroke="none"/></svg>
<div class="a" style="left:2px;top:439px;width:715px;height:16px;background:#171717;border-top:1px solid #1f1f1f"></div>
<div class="t" style="left:8.70px;top:444.37px;font-size:7.9px;letter-spacing:-0.319px;color:#e0e0e0;font-family:'Liberation Sans',sans-serif;">Edit</div>
<svg style="left:43px;top:443px" width="11" height="10" viewBox="0 0 11 10" fill="none" stroke="#e0e0e0" stroke-width="1"><path d="M4 8.5H0.5v-8h9v3.5"/><path d="M0.5 1.5h9" stroke-width="1.6"/><circle cx="6.8" cy="6.8" r="2.6" fill="#1a1a1a"/><circle cx="6.8" cy="6.8" r="1" fill="#e0e0e0" stroke="none"/></svg>
<svg style="left:65px;top:442.5px" width="11" height="10" viewBox="0 0 11 10" fill="none" stroke="#e0e0e0" stroke-width="1"><circle cx="5.3" cy="1.6" r="1.2"/><path d="M0.8 3.2c1.5 1.2 7.5 1.2 9 0M5.3 4.2v2.5M5.3 6.7l-2 3M7 7l3 2.8M10 7l-3 2.8"/></svg>
<div class="t" style="left:78.80px;top:444.36px;font-size:8px;letter-spacing:-0.222px;font-weight:bold;color:#f4f4f4;font-family:'Liberation Sans',sans-serif;">Accessibility: Investigate</div>
<svg style="left:505px;top:443px" width="10" height="9" viewBox="0 0 10 9" fill="none" stroke="#8a8a8a" stroke-width="1"><rect x="0.5" y="0.5" width="9" height="8"/><path d="M0.5 3.2h9M0.5 5.8h9M3.5 0.5v8M6.5 0.5v8"/></svg>
<svg style="left:534px;top:443px" width="10" height="9" viewBox="0 0 10 9" fill="none" stroke="#8a8a8a" stroke-width="1"><rect x="0.5" y="0.5" width="9" height="8"/><path d="M2.5 0.5v8M7.5 0.5v8"/><rect x="3.5" y="2.5" width="3" height="4" fill="#5a5a5a" stroke="none"/></svg>
<svg style="left:563px;top:443px" width="10" height="9" viewBox="0 0 10 9" fill="none" stroke="#8a8a8a" stroke-width="1"><rect x="0.5" y="0.5" width="9" height="8"/><path d="M0.5 5.5h5v-5M3 0.5v5"/></svg>
<svg style="left:586.5px;top:447px" width="5" height="1" viewBox="0 0 5 1" fill="none" stroke="#8a8a8a" stroke-width="1"><path d="M0 0.5h5"/></svg>
<div class="a" style="left:595px;top:447px;width:72px;height:1px;background:#9a9a9a"></div>
<div class="a" style="left:631px;top:444.5px;width:1.5px;height:6px;background:#cfcfcf"></div>
<svg style="left:671px;top:444.5px" width="6" height="6" viewBox="0 0 6 6" fill="none" stroke="#8a8a8a" stroke-width="1"><path d="M3 0v6M0 3h6"/></svg>
<div class="t" style="left:684.50px;top:444.17px;font-size:7.9px;letter-spacing:-0.052px;color:#8a8a8a;font-family:'Liberation Sans',sans-serif;">100%</div>
</body></html>
